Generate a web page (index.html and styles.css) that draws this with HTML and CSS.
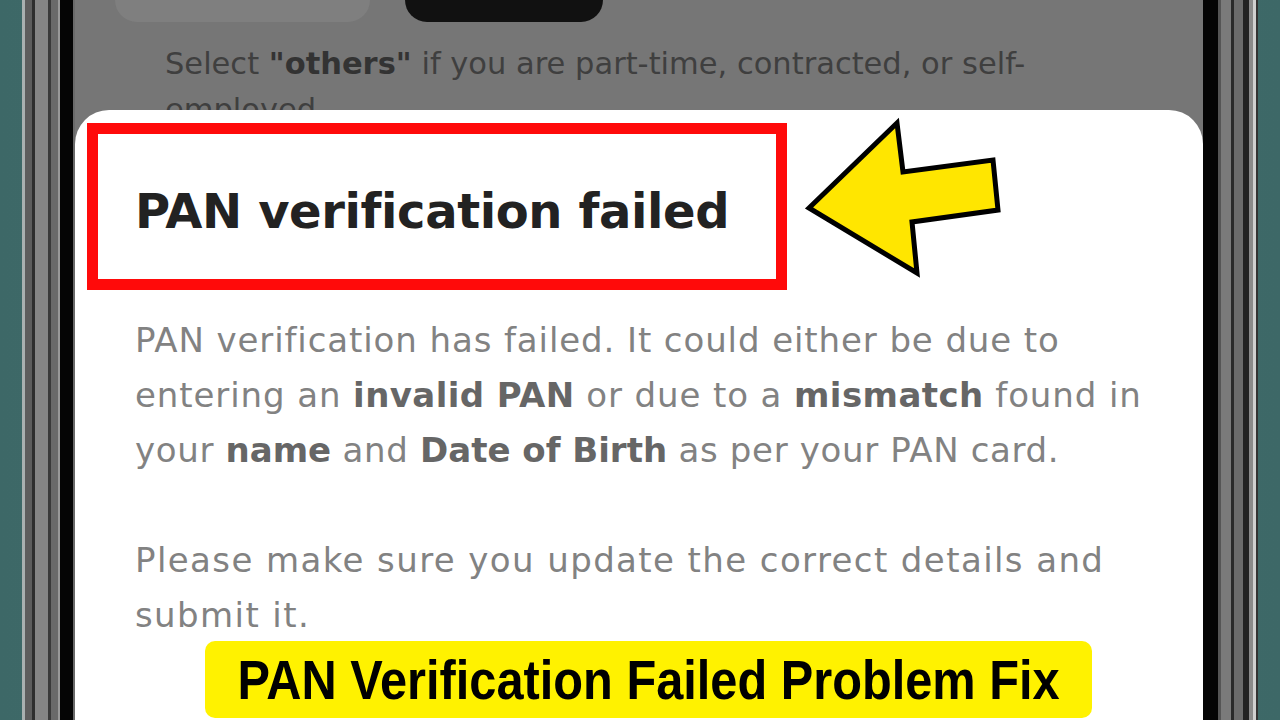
FILE: index.html
```html
<!DOCTYPE html>
<html lang="en">
<head>
  <meta charset="UTF-8">
  <meta name="viewport" content="width=device-width, initial-scale=1">
  <title>PAN verification failed</title>
  <link rel="stylesheet" href="styles.css">
</head>
<body>
  <div class="phone">
    <div class="bezel bezel-left"></div>

    <div class="screen">
      <div class="backdrop">
        <div class="pills">
          <div class="pill pill-light"></div>
          <div class="pill pill-dark"></div>
        </div>
        <p class="hint">Select <b>"others"</b> if you are part-time, contracted, or self-<br>employed</p>
      </div>

      <div class="sheet">
        <div class="title-box">
          <h1>PAN verification failed</h1>
        </div>
        <p class="msg">PAN verification has failed. It could either be due to<br>
          entering an <b>invalid PAN</b> or due to a <b>mismatch</b> found in<br>
          <span class="tight">your <b>name</b> and <b>Date of Birth</b> as per your PAN card.</span></p>
        <p class="msg msg-gap">Please make sure you update the correct details and<br>
          submit it.</p>
      </div>
    </div>

    <div class="bezel bezel-right"></div>
  </div>

  <!-- pointer arrow -->
  <svg class="arrow" width="210" height="170" viewBox="0 0 210 170">
    <polygon points="9,93 97,8 103,57 193,45 198,95 112,107 117,158"
             fill="#ffe600" stroke="#000" stroke-width="5" stroke-linejoin="miter"/>
  </svg>

  <div class="caption"><span>PAN Verification Failed Problem Fix</span></div>
</body>
</html>
```

FILE: styles.css
```css
* {
  box-sizing: border-box;
}

body {
  margin: 0;
  width: 1280px;
  height: 720px;
  overflow: hidden;
  position: relative;
  background: linear-gradient(90deg, #3d6867 0%, #44706f 50%, #3d6867 100%);
  font-family: 'DejaVu Sans', sans-serif;
}

.phone {
  display: flex;
  height: 720px;
  padding-left: 22px;
}

.bezel {
  height: 100%;
}

.bezel-left {
  width: 53px;
  background: linear-gradient(90deg,
    #a9b0b0 0, #a9b0b0 3px,
    #5d5d5d 3px, #5d5d5d 10px,
    #2e2e2e 10px, #2e2e2e 13px,
    #858585 13px, #858585 26px,
    #3a3a3a 26px, #3a3a3a 29px,
    #6a6a6a 29px, #6a6a6a 36px,
    #999 36px, #999 38px,
    #050505 38px, #050505 51px,
    #6a6a6a 51px);
}

.bezel-right {
  width: 55px;
  background: linear-gradient(90deg,
    #050505 0, #050505 15px,
    #555 15px, #555 18px,
    #7a7a7a 18px, #7a7a7a 28px,
    #2a2a2a 28px, #2a2a2a 31px,
    #6b6b6b 31px, #6b6b6b 40px,
    #222 40px, #222 46px,
    #8a8a8a 46px, #8a8a8a 50px,
    #d0d0d0 50px, #d0d0d0 53px,
    #333 53px);
}

.screen {
  width: 1128px;
  height: 100%;
  display: flex;
  flex-direction: column;
  background: #767676;
}

/* dimmed page behind the sheet */
.backdrop {
  height: 110px;
  overflow: hidden;
  flex-shrink: 0;
}

.pills {
  display: flex;
  height: 22px;
}

.pill {
  height: 22px;
  border-radius: 0 0 26px 26px;
}

.pill-light {
  margin-left: 40px;
  width: 255px;
  background: #7f7f7f;
}

.pill-dark {
  margin-left: 35px;
  width: 198px;
  background: #111;
}

.hint {
  margin: 19px 0 0 90px;
  font-size: 30.5px;
  line-height: 46px;
  color: #3f3f3f;
  white-space: nowrap;
}

.hint b {
  color: #333;
}

.sheet {
  flex: 1;
  background: #fff;
  border-radius: 34px 34px 0 0;
  padding-top: 13px;
}

.title-box {
  margin-left: 12px;
  width: 700px;
  height: 167px;
  border: 11px solid #ff0a0a;
  display: flex;
  align-items: center;
  padding: 8px 0 0 37px;
}

h1 {
  margin: 0;
  font-size: 48px;
  font-weight: bold;
  color: #222;
  letter-spacing: -0.4px;
}

.msg {
  margin: 23px 0 0 60px;
  font-size: 34px;
  line-height: 55px;
  letter-spacing: 0.9px;
  color: #828282;
  white-space: nowrap;
}

.msg b {
  color: #666;
  letter-spacing: 0.4px;
}

.msg .tight {
  letter-spacing: 0.65px;
}

.msg .tight b {
  letter-spacing: 0;
}

.msg-gap {
  margin-top: 55px;
  letter-spacing: 1.4px;
}

.arrow {
  position: absolute;
  left: 800px;
  top: 115px;
}

.caption {
  position: absolute;
  left: 205px;
  top: 641px;
  width: 887px;
  height: 77px;
  border-radius: 10px;
  background: #fff200;
  display: flex;
  align-items: center;
  justify-content: center;
}

.caption span {
  display: inline-block;
  font-family: 'Liberation Sans', Arial, sans-serif;
  font-weight: bold;
  font-size: 56px;
  color: #000;
  white-space: nowrap;
  transform: scaleX(0.87);
}
```
